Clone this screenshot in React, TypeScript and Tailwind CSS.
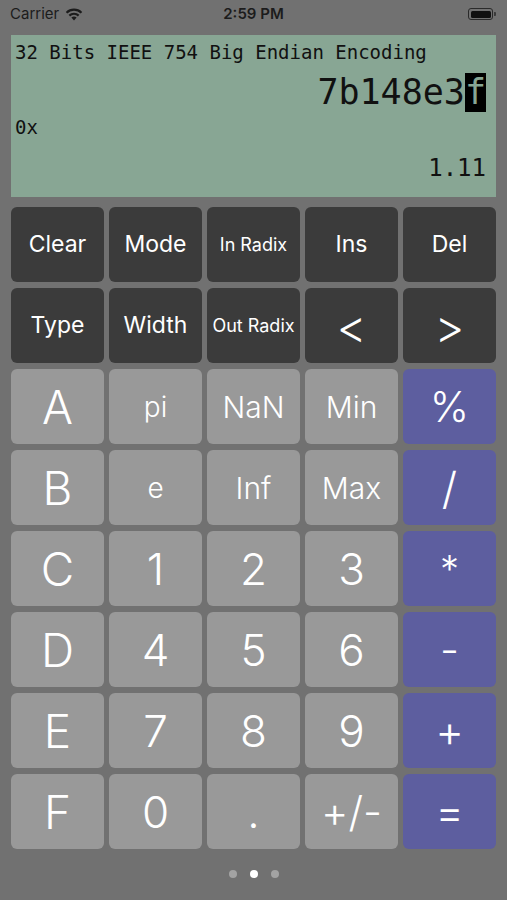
import React from 'react';

type Key = { label: string; kind: 'dark' | 'light' | 'op'; size: string; weight?: string };

const KEYS: Key[] = [
  { label: 'Clear', kind: 'dark', size: 'text-[23px]', weight: 'font-normal' },
  { label: 'Mode', kind: 'dark', size: 'text-[23px]', weight: 'font-normal' },
  { label: 'In Radix', kind: 'dark', size: 'text-[18px]', weight: 'font-normal' },
  { label: 'Ins', kind: 'dark', size: 'text-[23px]', weight: 'font-normal' },
  { label: 'Del', kind: 'dark', size: 'text-[23px]', weight: 'font-normal' },

  { label: 'Type', kind: 'dark', size: 'text-[23px]', weight: 'font-normal' },
  { label: 'Width', kind: 'dark', size: 'text-[23px]', weight: 'font-normal' },
  { label: 'Out Radix', kind: 'dark', size: 'text-[18px]', weight: 'font-normal' },
  { label: '<', kind: 'dark', size: 'text-[46px]' },
  { label: '>', kind: 'dark', size: 'text-[46px]' },

  { label: 'A', kind: 'light', size: 'text-[46px]' },
  { label: 'pi', kind: 'light', size: 'text-[28px]' },
  { label: 'NaN', kind: 'light', size: 'text-[30px]' },
  { label: 'Min', kind: 'light', size: 'text-[30px]' },
  { label: '%', kind: 'op', size: 'text-[42px]' },

  { label: 'B', kind: 'light', size: 'text-[46px]' },
  { label: 'e', kind: 'light', size: 'text-[28px]' },
  { label: 'Inf', kind: 'light', size: 'text-[30px]' },
  { label: 'Max', kind: 'light', size: 'text-[30px]' },
  { label: '/', kind: 'op', size: 'text-[44px]' },

  { label: 'C', kind: 'light', size: 'text-[46px]' },
  { label: '1', kind: 'light', size: 'text-[44px]' },
  { label: '2', kind: 'light', size: 'text-[44px]' },
  { label: '3', kind: 'light', size: 'text-[44px]' },
  { label: '*', kind: 'op', size: 'text-[38px]' },

  { label: 'D', kind: 'light', size: 'text-[46px]' },
  { label: '4', kind: 'light', size: 'text-[44px]' },
  { label: '5', kind: 'light', size: 'text-[44px]' },
  { label: '6', kind: 'light', size: 'text-[44px]' },
  { label: '-', kind: 'op', size: 'text-[42px]' },

  { label: 'E', kind: 'light', size: 'text-[46px]' },
  { label: '7', kind: 'light', size: 'text-[44px]' },
  { label: '8', kind: 'light', size: 'text-[44px]' },
  { label: '9', kind: 'light', size: 'text-[44px]' },
  { label: '+', kind: 'op', size: 'text-[44px]' },

  { label: 'F', kind: 'light', size: 'text-[46px]' },
  { label: '0', kind: 'light', size: 'text-[44px]' },
  { label: '.', kind: 'light', size: 'text-[44px]' },
  { label: '+/-', kind: 'light', size: 'text-[42px]' },
  { label: '=', kind: 'op', size: 'text-[44px]' },
];

const BG = {
  dark: 'bg-[#3b3b3b]',
  light: 'bg-[#999999]',
  op: 'bg-[#5d5e9f]',
};

const StatusBar = () => (
  <div className="relative h-[35px] flex items-start justify-between px-[10px] pt-[5px] text-[#1c1c1c]">
    <div className="flex items-center gap-[6px] text-[15px] leading-[18px]">
      <span>Carrier</span>
      <svg width="18" height="13" viewBox="0 0 18 13">
        <path d="M9 12.5 L6.4 9.6 A3.8 3.8 0 0 1 11.6 9.6 Z" fill="#1c1c1c" />
        <path d="M3.6 6.8 A7.8 7.8 0 0 1 14.4 6.8 L12.9 8.4 A5.6 5.6 0 0 0 5.1 8.4 Z" fill="#1c1c1c" />
        <path d="M0.8 3.9 A11.8 11.8 0 0 1 17.2 3.9 L15.7 5.5 A9.6 9.6 0 0 0 2.3 5.5 Z" fill="#1c1c1c" />
      </svg>
    </div>
    <span className="absolute left-0 right-0 top-[5px] text-center text-[15px] leading-[18px] font-semibold">2:59 PM</span>
    <div className="flex items-center pt-[3px] pr-[1px]">
      <div className="w-[25px] h-[12px] rounded-[3px] border border-[#2a2a2a] p-[1.5px]">
        <div className="w-full h-full rounded-[1.5px] bg-[#111111]" />
      </div>
      <div className="w-[2px] h-[4px] rounded-r-[1px] bg-[#3a3a3a] ml-[1px]" />
    </div>
  </div>
);

const Display = () => (
  <div
    className="mx-[11px] h-[162px] bg-[#88a694] text-[#111111] pl-[4px] pr-[10px] pt-[6px] flex flex-col"
    style={{ fontFamily: '"DejaVu Sans Mono", monospace' }}
  >
    <div className="text-[19px] leading-[22px] whitespace-pre">32 Bits IEEE 754 Big Endian Encoding</div>
    <div className="mt-[10px] flex justify-end text-[35px] leading-[39px]">
      <span>7b148e3</span>
      <span className="bg-black text-[#88a694]">f</span>
    </div>
    <div className="mt-[4px] text-[19px] leading-[22px]">0x</div>
    <div className="mt-[16px] text-right text-[24px] leading-[28px]">1.11</div>
  </div>
);

export default function App() {
  return (
    <div
      className="w-[507px] h-[900px] bg-[#717171] flex flex-col overflow-hidden"
      style={{ fontFamily: 'Inter, "Noto Sans", sans-serif' }}
    >
      <StatusBar />
      <Display />
      <div className="grid grid-cols-5 gap-x-[5px] gap-y-[6px] px-[11px] pt-[10px]">
        {KEYS.map((k, i) => (
          <div
            key={i}
            className={`h-[75px] rounded-[6px] flex items-center justify-center text-white leading-none ${k.weight ?? 'font-light'} ${BG[k.kind]} ${k.size}`}
          >
            {k.label}
          </div>
        ))}
      </div>
      <div className="flex justify-center items-center gap-[13px] mt-[21px]">
        <div className="w-[8px] h-[8px] rounded-full bg-[#a3a3a3]" />
        <div className="w-[8px] h-[8px] rounded-full bg-white" />
        <div className="w-[8px] h-[8px] rounded-full bg-[#a3a3a3]" />
      </div>
    </div>
  );
}
